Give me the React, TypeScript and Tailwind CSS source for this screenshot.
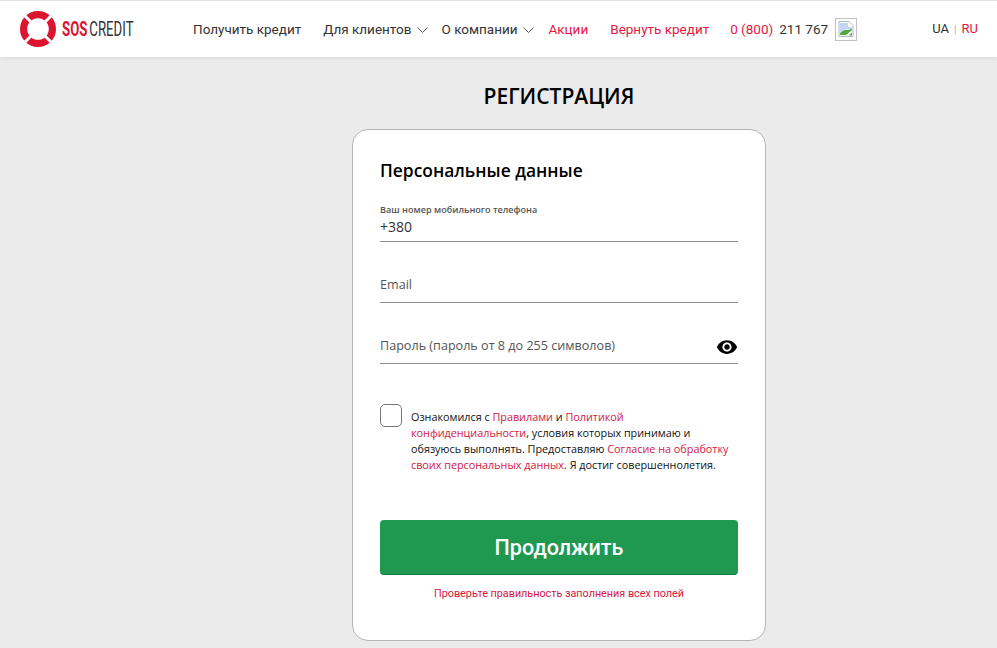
const roboto = "font-['Roboto',sans-serif]"

function Chevron() {
  return (
    <svg width="11" height="6" viewBox="0 0 11 6" fill="none" className="mt-[1px] shrink-0">
      <path d="M0.5 0.5l5 5 5-5" stroke="#555" strokeWidth="1" />
    </svg>
  )
}

function Logo() {
  return (
    <svg width="36" height="36" viewBox="0 0 36 36" className="shrink-0">
      <circle cx="18" cy="18" r="14.4" fill="none" stroke="#dc1430" strokeWidth="7.2" />
      <path d="M3 3l9 9M33 3l-9 9M3 33l9-9M33 33l-9-9" stroke="#fff" strokeWidth="3" />
    </svg>
  )
}

function BrokenImage() {
  return (
    <div className="ml-[7px] flex h-[23px] w-[22px] items-center justify-center border border-[#c0c0c0] bg-white">
      <svg width="16" height="16" viewBox="0 0 16 16">
        <path d="M1 0.5h10l4 4v11H1z" fill="#fff" stroke="#a9b8c9" />
        <path d="M2 2h8v4h4v3L8 8 2 11z" fill="#c3d5f2" />
        <path d="M2 14v-2q4-4 8-3l4-1v1l-6 5z" fill="#4fa83d" />
        <path d="M11 14.5l3-3v3z" fill="#4fa83d" />
      </svg>
    </div>
  )
}

function Field({ label, children }: { label: string; children?: React.ReactNode }) {
  return (
    <div className="flex h-[37px] items-start justify-between border-b border-[#8c8c8c] text-[12.6px] leading-[18px] text-[#555]">
      <span className="mt-[10px]">{label}</span>
      {children}
    </div>
  )
}

export default function App() {
  return (
    <div className="h-[648px] overflow-hidden bg-[#ebebeb] font-['Open_Sans',sans-serif]">
      {/* Header */}
      <header className={`flex h-[57px] items-center border-t border-[#e0e0e0] bg-white pl-[20px] pr-[19px] text-[13.5px] text-[#333] shadow-[0_1px_4px_rgba(0,0,0,0.08)] ${roboto}`}>
        <Logo />
        <div className="ml-[6px] w-[95px] whitespace-nowrap text-[21px] leading-none">
          <span className="inline-block origin-left scale-x-[0.63] font-bold text-[#dc1430]">SOS<span className="ml-[3px] font-normal text-[#333]">CREDIT</span></span>
        </div>
        <nav className="ml-[36px] flex items-center whitespace-nowrap">
          <span>Получить кредит</span>
          <span className="ml-[22px] mr-[5px]">Для клиентов</span>
          <Chevron />
          <span className="ml-[14px] mr-[5px]">О компании</span>
          <Chevron />
          <span className="ml-[15px] text-[#e5163f]">Акции</span>
          <span className="ml-[22px] text-[#e5163f]">Вернуть кредит</span>
          <span className="ml-[21px] text-[#e5163f]">0 (800)</span>
          <span className="ml-[6px]">211 767</span>
          <BrokenImage />
        </nav>
        <div className="ml-auto flex items-center text-[13px]">
          <span>UA</span>
          <span className="mx-[5px] text-[10px] text-[#aaa]">|</span>
          <span className="text-[#e5163f]">RU</span>
        </div>
      </header>

      <main className="flex flex-col items-center">
        <h1 className="ml-[121px] mt-[25px] text-[21px] font-semibold leading-[28px] text-black">РЕГИСТРАЦИЯ</h1>

        {/* Card */}
        <div className="ml-[121px] mt-[19px] h-[512px] w-[414px] rounded-[16px] border border-[#b5b5b5] bg-white px-[27px] pt-[27px]">
          <h2 className="text-[17.4px] font-semibold leading-[26px] text-black">Персональные данные</h2>

          <div className="mt-[21px] flex h-[38px] flex-col border-b border-[#8c8c8c]">
            <span className="text-[9.1px] font-semibold leading-[11px] text-[#555]">Ваш номер мобильного телефона</span>
            <span className="mt-[2px] text-[14px] leading-[20px] text-[#333]">+380</span>
          </div>

          <div className="mt-[24px]"><Field label="Email" /></div>
          <div className="mt-[24px]">
            <Field label="Пароль (пароль от 8 до 255 символов)">
              <svg width="22" height="22" viewBox="0 0 24 24" className="mt-[9px]">
                <path fill="#000" d="M12 4.5C7 4.5 2.73 7.61 1 12c1.73 4.39 6 7.5 11 7.5s9.27-3.11 11-7.5c-1.73-4.39-6-7.5-11-7.5zM12 17c-2.76 0-5-2.24-5-5s2.24-5 5-5 5 2.24 5 5-2.24 5-5 5zm0-8c-1.66 0-3 1.34-3 3s1.34 3 3 3 3-1.34 3-3-1.34-3-3-3z" />
              </svg>
            </Field>
          </div>

          {/* Agreement */}
          <div className="mt-[40px] flex">
            <div className="h-[23px] w-[22px] shrink-0 rounded-[5px] border border-[#777] bg-white" />
            <div className="ml-[9px] mt-[5px] whitespace-nowrap text-[10.8px] leading-[16px] text-[#111]">
              <p>Ознакомился с <span className="text-[#d6163f]">Правилами</span> и <span className="text-[#d6163f]">Политикой</span></p>
              <p><span className="text-[#d6163f]">конфиденциальности</span>, условия которых принимаю и</p>
              <p>обязуюсь выполнять. Предоставляю <span className="text-[#d6163f]">Согласие на обработку</span></p>
              <p><span className="text-[#d6163f]">своих персональных данных</span>. Я достиг совершеннолетия.</p>
            </div>
          </div>

          <button className={`mt-[47px] flex h-[55px] w-full items-center justify-center rounded-[4px] border-b border-[#147a40] bg-[#1f9850] pt-[2px] text-[21.5px] font-medium text-white ${roboto}`}>
            Продолжить
          </button>
          <p className={`mt-[11px] text-center text-[10.8px] leading-[16px] text-[#d6163f] ${roboto}`}>
            Проверьте правильность заполнения всех полей
          </p>
        </div>
      </main>
    </div>
  )
}
